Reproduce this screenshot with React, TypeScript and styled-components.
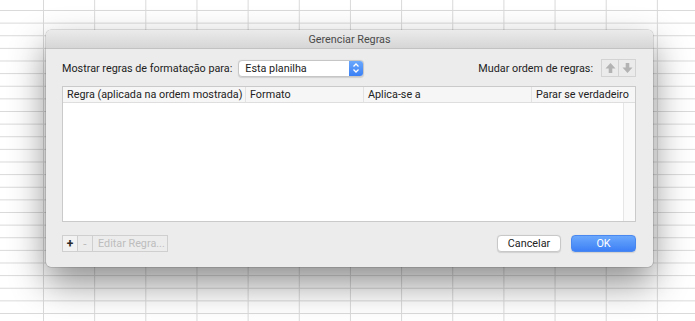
import React from 'react';
import styled, { createGlobalStyle } from 'styled-components';

const GlobalStyle = createGlobalStyle`
  html, body {
    margin: 0;
    padding: 0;
    background: #ffffff;
  }
  body {
    font-family: 'Roboto', 'Liberation Sans', sans-serif;
    -webkit-font-smoothing: antialiased;
  }
`;

const columns = [
  { title: 'Regra (aplicada na ordem mostrada)', width: 183 },
  { title: 'Formato', width: 118 },
  { title: 'Aplica-se a', width: 168 },
  { title: 'Parar se verdadeiro', width: 0 },
];

const UpArrow = () => (
  <svg width="11" height="12" viewBox="0 0 11 12">
    <path d="M5.5 1 L10.5 6.5 L7.3 6.5 L7.3 11 L3.7 11 L3.7 6.5 L0.5 6.5 Z" fill="#b3b3b3" />
  </svg>
);

const DownArrow = () => (
  <svg width="11" height="12" viewBox="0 0 11 12">
    <path d="M5.5 11 L10.5 5.5 L7.3 5.5 L7.3 1 L3.7 1 L3.7 5.5 L0.5 5.5 Z" fill="#b3b3b3" />
  </svg>
);

const Stepper = () => (
  <svg width="8" height="12" viewBox="0 0 8 12">
    <path d="M1.5 4.5 L4 2 L6.5 4.5" fill="none" stroke="#fff" strokeWidth="1.3" />
    <path d="M1.5 7.5 L4 10 L6.5 7.5" fill="none" stroke="#fff" strokeWidth="1.3" />
  </svg>
);

const App = () => {
  return (
    <>
      <GlobalStyle />
      <Sheet>
        <Dialog>
          <TitleBar>Gerenciar Regras</TitleBar>
          <Body>
            <TopRow>
              <Label>Mostrar regras de formatação para:</Label>
              <Select>
                <SelectText>Esta planilha</SelectText>
                <SelectStepper>
                  <Stepper />
                </SelectStepper>
              </Select>
              <Spacer />
              <Label>Mudar ordem de regras:</Label>
              <OrderGroup>
                <OrderButton>
                  <UpArrow />
                </OrderButton>
                <OrderButton>
                  <DownArrow />
                </OrderButton>
              </OrderGroup>
            </TopRow>

            <Table>
              <HeaderRow>
                {columns.map((col, i) => (
                  <HeaderCell key={col.title} $width={col.width} $last={i === columns.length - 1}>
                    {col.title}
                  </HeaderCell>
                ))}
              </HeaderRow>
              <TableBody>
                <Rows />
                <ScrollTrack />
              </TableBody>
            </Table>

            <Footer>
              <Segmented>
                <SegButton $enabled>+</SegButton>
                <SegButton>-</SegButton>
                <SegButton $wide>Editar Regra...</SegButton>
              </Segmented>
              <Actions>
                <PushButton>Cancelar</PushButton>
                <PushButton $primary>OK</PushButton>
              </Actions>
            </Footer>
          </Body>
        </Dialog>
      </Sheet>
    </>
  );
};

const Sheet = styled.div`
  width: 695px;
  height: 321px;
  overflow: hidden;
  box-sizing: border-box;
  padding: 30px 0 0 46px;
  background-color: #ffffff;
  background-image: linear-gradient(to right, #d9d9d9 1px, transparent 1px),
    linear-gradient(to bottom, #d9d9d9 1px, transparent 1px);
  background-size: 51.17px 100%, 100% 12.63px;
  background-position: 43px 0, 0 10px;
`;

const Dialog = styled.div`
  width: 607px;
  height: 237px;
  display: flex;
  flex-direction: column;
  background: #ececec;
  border-radius: 5px;
  overflow: hidden;
  box-shadow: 0 16px 36px rgba(0, 0, 0, 0.45), 0 0 0 0.5px rgba(0, 0, 0, 0.22);
`;

const TitleBar = styled.div`
  height: 18px;
  flex: none;
  display: flex;
  align-items: center;
  justify-content: center;
  background: linear-gradient(to bottom, #ebebeb, #d6d6d6);
  border-bottom: 1px solid #c2c2c2;
  font-size: 10.8px;
  color: #4a4a4a;
`;

const Body = styled.div`
  flex: 1;
  display: flex;
  flex-direction: column;
  padding: 10px 17px 15px 16px;
`;

const TopRow = styled.div`
  display: flex;
  align-items: center;
  height: 18px;
`;

const Label = styled.span`
  font-size: 10.8px;
  color: #222222;
  white-space: nowrap;
`;

const Spacer = styled.div`
  flex: 1;
`;

const Select = styled.div`
  margin-left: 6px;
  width: 126px;
  height: 17px;
  display: flex;
  box-sizing: border-box;
  background: #ffffff;
  border: 1px solid #c6c6c6;
  border-radius: 4px;
  overflow: hidden;
  box-shadow: 0 0.5px 1px rgba(0, 0, 0, 0.12);
`;

const SelectText = styled.span`
  flex: 1;
  padding-left: 6px;
  font-size: 10.8px;
  line-height: 15px;
  color: #222222;
`;

const SelectStepper = styled.div`
  width: 14px;
  display: flex;
  align-items: center;
  justify-content: center;
  background: linear-gradient(to bottom, #6aa8fc, #3b80f6);
`;

const OrderGroup = styled.div`
  margin-left: 8px;
  display: flex;
`;

const OrderButton = styled.div`
  width: 18px;
  height: 18px;
  box-sizing: border-box;
  display: flex;
  align-items: center;
  justify-content: center;
  background: #ebebeb;
  border: 1px solid #d3d3d3;
  & + & {
    margin-left: -1px;
  }
`;

const Table = styled.div`
  margin-top: 9px;
  height: 136px;
  display: flex;
  flex-direction: column;
  box-sizing: border-box;
  background: #ffffff;
  border: 1px solid #cacaca;
`;

const HeaderRow = styled.div`
  height: 15px;
  flex: none;
  display: flex;
  background: #f6f6f6;
  border-bottom: 1px solid #dedede;
`;

const HeaderCell = styled.div<{ $width: number; $last?: boolean }>`
  ${({ $width, $last }) => ($last ? 'flex: 1;' : `width: ${$width}px; flex: none;`)}
  box-sizing: border-box;
  padding-left: 4px;
  font-size: 10.8px;
  line-height: 15px;
  color: #222222;
  white-space: nowrap;
  overflow: hidden;
  border-right: ${({ $last }) => ($last ? 'none' : '1px solid #e2e2e2')};
`;

const TableBody = styled.div`
  flex: 1;
  display: flex;
`;

const Rows = styled.div`
  flex: 1;
`;

const ScrollTrack = styled.div`
  width: 11px;
  background: #fafafa;
  border-left: 1px solid #e6e6e6;
`;

const Footer = styled.div`
  margin-top: auto;
  display: flex;
  align-items: center;
  justify-content: space-between;
`;

const Segmented = styled.div`
  display: flex;
  height: 17px;
`;

const SegButton = styled.div<{ $enabled?: boolean; $wide?: boolean }>`
  box-sizing: border-box;
  width: ${({ $wide }) => ($wide ? '76px' : '16px')};
  display: flex;
  align-items: center;
  justify-content: ${({ $wide }) => ($wide ? 'flex-start' : 'center')};
  padding-left: ${({ $wide }) => ($wide ? '5px' : '0')};
  font-size: ${({ $wide }) => ($wide ? '10.8px' : '12px')};
  font-weight: ${({ $enabled }) => ($enabled ? 700 : 400)};
  color: ${({ $enabled }) => ($enabled ? '#2a2a2a' : '#bdbdbd')};
  background: ${({ $enabled }) => ($enabled ? '#f2f2f2' : '#ececec')};
  border: 1px solid #cfcfcf;
  white-space: nowrap;
  & + & {
    margin-left: -1px;
  }
`;

const Actions = styled.div`
  display: flex;
  gap: 10px;
`;

const PushButton = styled.div<{ $primary?: boolean }>`
  box-sizing: border-box;
  width: ${({ $primary }) => ($primary ? '65px' : '64px')};
  height: 17px;
  display: flex;
  align-items: center;
  justify-content: center;
  border-radius: 4px;
  font-size: 10.8px;
  color: ${({ $primary }) => ($primary ? '#ffffff' : '#222222')};
  background: ${({ $primary }) =>
    $primary ? 'linear-gradient(to bottom, #6ba8fc, #3d80f6)' : '#ffffff'};
  border: 1px solid ${({ $primary }) => ($primary ? '#4a88f0' : '#c8c8c8')};
  box-shadow: 0 0.5px 1px rgba(0, 0, 0, 0.12);
`;

export default App;
